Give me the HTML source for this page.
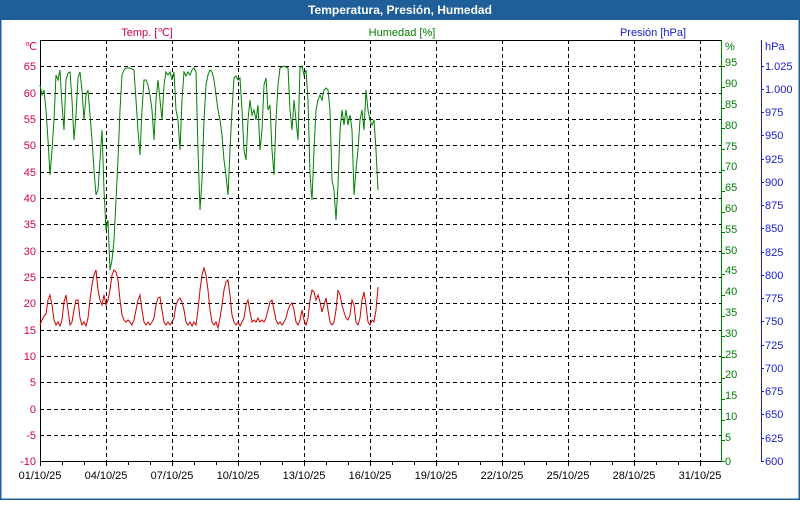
<!DOCTYPE html>
<html><head><meta charset="utf-8"><style>
body{margin:0;width:800px;height:500px;overflow:hidden;background:#fff;font-family:"Liberation Sans",sans-serif}
</style></head><body>
<svg width="800" height="500" xmlns="http://www.w3.org/2000/svg" font-family="Liberation Sans, sans-serif" font-size="11">
<rect x="0" y="0" width="800" height="500" fill="#fff"/>
<rect x="0.5" y="0.5" width="799" height="499" fill="none" stroke="#1f5f99" stroke-width="2"/>
<rect x="0" y="0" width="800" height="20" fill="#1f5f99"/>
<text x="400" y="14" text-anchor="middle" fill="#fff" font-weight="bold" font-size="12">Temperatura, Presión, Humedad</text>
<text x="147" y="36" text-anchor="middle" fill="#d4004e">Temp. [℃]</text>
<text x="402" y="36" text-anchor="middle" fill="#008000">Humedad [%]</text>
<text x="653" y="36" text-anchor="middle" fill="#1a1acc">Presión [hPa]</text>
<g stroke="#000" stroke-dasharray="4,3" stroke-width="1">
<line x1="40" y1="66.5" x2="721" y2="66.5"/><line x1="40" y1="93.5" x2="721" y2="93.5"/><line x1="40" y1="119.5" x2="721" y2="119.5"/><line x1="40" y1="145.5" x2="721" y2="145.5"/><line x1="40" y1="172.5" x2="721" y2="172.5"/><line x1="40" y1="198.5" x2="721" y2="198.5"/><line x1="40" y1="224.5" x2="721" y2="224.5"/><line x1="40" y1="251.5" x2="721" y2="251.5"/><line x1="40" y1="277.5" x2="721" y2="277.5"/><line x1="40" y1="303.5" x2="721" y2="303.5"/><line x1="40" y1="330.5" x2="721" y2="330.5"/><line x1="40" y1="356.5" x2="721" y2="356.5"/><line x1="40" y1="382.5" x2="721" y2="382.5"/><line x1="40" y1="409.5" x2="721" y2="409.5"/><line x1="40" y1="435.5" x2="721" y2="435.5"/>
<line x1="106.5" y1="40" x2="106.5" y2="461"/><line x1="172.5" y1="40" x2="172.5" y2="461"/><line x1="238.5" y1="40" x2="238.5" y2="461"/><line x1="304.5" y1="40" x2="304.5" y2="461"/><line x1="370.5" y1="40" x2="370.5" y2="461"/><line x1="436.5" y1="40" x2="436.5" y2="461"/><line x1="502.5" y1="40" x2="502.5" y2="461"/><line x1="568.5" y1="40" x2="568.5" y2="461"/><line x1="634.5" y1="40" x2="634.5" y2="461"/><line x1="700.5" y1="40" x2="700.5" y2="461"/>
</g>
<line x1="40" y1="40.5" x2="721" y2="40.5" stroke="#000"/>
<line x1="40.5" y1="40" x2="40.5" y2="462" stroke="#000"/>
<line x1="40" y1="461.5" x2="721" y2="461.5" stroke="#000"/>
<line x1="721.5" y1="40" x2="721.5" y2="462" stroke="#008000"/>
<line x1="761.5" y1="40" x2="761.5" y2="462" stroke="#1a1acc"/>
<g stroke="#000">
<path d="M62.5 461v4M84.5 461v4M106.5 461v5M128.5 461v4M150.5 461v4M172.5 461v5M194.5 461v4M216.5 461v4M238.5 461v5M260.5 461v4M282.5 461v4M304.5 461v5M326.5 461v4M348.5 461v4M370.5 461v5M392.5 461v4M414.5 461v4M436.5 461v5M458.5 461v4M480.5 461v4M502.5 461v5M524.5 461v4M546.5 461v4M568.5 461v5M590.5 461v4M612.5 461v4M634.5 461v5M656.5 461v4M678.5 461v4M700.5 461v5M40.5 461v5"/>
</g>
<g fill="#000" text-anchor="middle" font-size="11">
<text x="40" y="479">01/10/25</text><text x="106" y="479">04/10/25</text><text x="172" y="479">07/10/25</text><text x="238" y="479">10/10/25</text><text x="304" y="479">13/10/25</text><text x="370" y="479">16/10/25</text><text x="436" y="479">19/10/25</text><text x="502" y="479">22/10/25</text><text x="568" y="479">25/10/25</text><text x="634" y="479">28/10/25</text><text x="700" y="479">31/10/25</text>
</g>
<g fill="#d4004e" text-anchor="end">
<text x="37" y="50">℃</text>
<text x="36" y="70">65</text><text x="36" y="97">60</text><text x="36" y="123">55</text><text x="36" y="149">50</text><text x="36" y="176">45</text><text x="36" y="202">40</text><text x="36" y="228">35</text><text x="36" y="255">30</text><text x="36" y="281">25</text><text x="36" y="307">20</text><text x="36" y="334">15</text><text x="36" y="360">10</text><text x="36" y="386">5</text><text x="36" y="413">0</text><text x="36" y="439">-5</text><text x="36" y="465">-10</text>
</g>
<g stroke="#008000">
<path d="M721 66.5h4M721 87.5h4M721 108.5h4M721 128.5h4M721 149.5h4M721 170.5h4M721 191.5h4M721 212.5h4M721 232.5h4M721 253.5h4M721 274.5h4M721 295.5h4M721 316.5h4M721 336.5h4M721 357.5h4M721 378.5h4M721 399.5h4M721 420.5h4M721 440.5h4M721 461.5h4"/>
</g>
<g fill="#008000">
<text x="725" y="50">%</text>
<text x="725" y="66">95</text><text x="725" y="87">90</text><text x="725" y="108">85</text><text x="725" y="129">80</text><text x="725" y="150">75</text><text x="725" y="170">70</text><text x="725" y="191">65</text><text x="725" y="212">60</text><text x="725" y="233">55</text><text x="725" y="254">50</text><text x="725" y="274">45</text><text x="725" y="295">40</text><text x="725" y="316">35</text><text x="725" y="337">30</text><text x="725" y="358">25</text><text x="725" y="378">20</text><text x="725" y="399">15</text><text x="725" y="420">10</text><text x="725" y="441">5</text><text x="725" y="465">0</text>
</g>
<g stroke="#1a1acc">
<path d="M761 66.5h3M761 89.5h3M761 112.5h3M761 135.5h3M761 159.5h3M761 182.5h3M761 205.5h3M761 228.5h3M761 252.5h3M761 275.5h3M761 298.5h3M761 321.5h3M761 345.5h3M761 368.5h3M761 391.5h3M761 414.5h3M761 438.5h3M761 461.5h3"/>
</g>
<g fill="#1a1acc">
<text x="765" y="50">hPa</text>
<text x="765" y="70">1.025</text><text x="765" y="93">1.000</text><text x="765" y="116">975</text><text x="765" y="139">950</text><text x="765" y="163">925</text><text x="765" y="186">900</text><text x="765" y="209">875</text><text x="765" y="232">850</text><text x="765" y="256">825</text><text x="765" y="279">800</text><text x="765" y="302">775</text><text x="765" y="325">750</text><text x="765" y="349">725</text><text x="765" y="372">700</text><text x="765" y="395">675</text><text x="765" y="418">650</text><text x="765" y="442">625</text><text x="765" y="465">600</text>
</g>
<polyline fill="none" stroke="#008000" stroke-width="1" points="40,85 42,95 44,90 46,110 48,140 50,175 52,150 54,120 56,75 58,80 60,70 62,105 64,130 66,80 68,73 70,72 72,100 74,140 76,115 78,78 80,72 82,90 84,120 86,95 88,90 90,115 92,140 94,170 96,195 98,190 100,160 102,130 104,190 106,230 108,220 110,270 112,260 114,240 116,200 118,160 120,110 122,75 124,70 126,68 130,68 134,70 136,100 138,130 140,155 142,110 144,80 146,80 148,85 150,95 152,110 154,140 156,100 158,80 160,100 162,120 164,85 166,72 168,75 170,72 172,80 174,72 176,110 178,120 180,150 182,100 184,72 186,76 188,72 190,75 192,70 194,68 196,72 198,150 200,210 202,180 204,120 206,85 208,75 210,70 212,72 214,80 216,95 218,110 220,120 222,135 224,160 226,175 228,195 230,150 232,110 234,78 236,76 238,80 240,78 242,110 244,150 246,160 248,120 250,100 252,115 254,110 256,120 258,105 260,150 262,130 264,85 266,78 268,110 270,105 272,150 274,175 276,120 278,85 280,68 284,66 288,68 290,110 292,130 294,100 296,120 298,140 300,68 302,66 304,75 306,70 308,100 310,175 312,200 314,150 316,110 318,100 320,95 322,100 324,90 326,88 328,90 330,110 332,180 334,190 336,220 338,185 340,130 342,110 344,125 346,110 348,125 350,115 352,130 354,195 356,170 358,150 360,120 362,110 364,130 366,90 368,110 370,120 372,125 374,120 376,150 378,190"/>
<polyline fill="none" stroke="#cc0000" stroke-width="1" points="40,325 42,320 44,316 46,314 48,300 50,295 52,305 54,320 56,325 58,322 60,326 62,320 64,302 66,295 68,310 70,325 72,322 74,310 76,300 78,300 80,318 82,325 84,322 86,326 88,318 90,300 92,285 94,275 96,270 98,290 100,300 102,305 104,295 106,305 108,300 110,290 112,275 114,270 116,272 118,280 120,300 122,315 124,320 126,322 128,320 130,322 132,325 134,320 136,310 138,300 140,295 142,310 144,322 146,325 148,322 150,325 152,322 154,318 156,305 158,298 160,297 162,310 164,322 166,325 168,322 170,325 172,322 174,318 176,305 178,300 180,298 182,302 184,310 186,322 188,325 190,322 192,326 194,322 196,325 198,310 200,290 202,275 204,268 206,275 208,290 210,310 212,322 214,325 216,322 218,328 220,318 222,305 224,290 226,282 228,280 230,295 232,315 234,322 236,325 238,322 240,326 242,322 244,318 246,305 248,300 250,312 252,322 254,320 256,322 258,318 260,322 262,320 264,322 266,318 268,310 270,302 272,300 274,310 276,320 278,324 280,322 282,325 284,322 286,318 288,310 290,305 292,303 294,310 296,322 298,325 300,320 302,310 304,320 306,325 308,318 310,300 312,290 314,292 316,300 318,295 320,302 322,312 324,305 326,298 328,310 330,322 332,325 334,322 336,310 338,290 340,295 342,305 344,312 346,318 348,320 350,315 352,300 354,305 356,322 358,325 360,318 362,300 364,292 366,305 368,322 370,325 372,320 374,322 376,310 378,287"/>
</svg>
</body></html>
